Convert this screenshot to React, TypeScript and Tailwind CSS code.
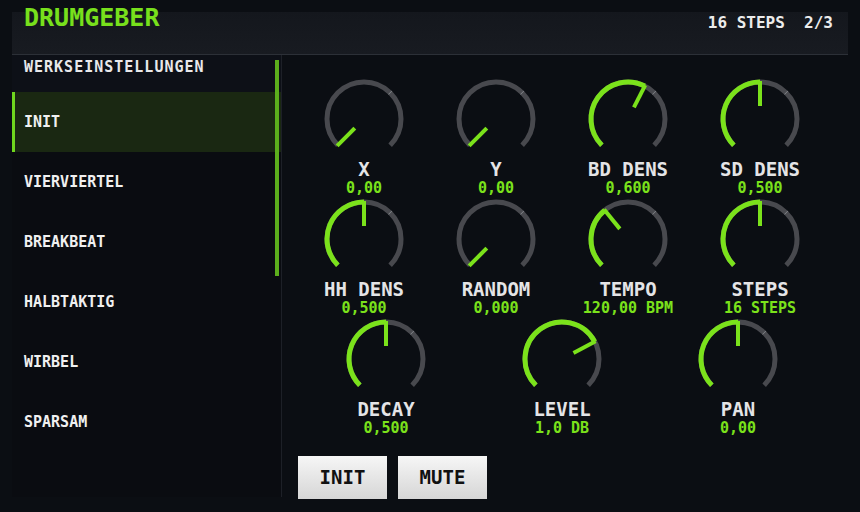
import React from "react";

const GREEN = "#7be21b";
const GRAY = "#48494e";

function polar(cx: number, cy: number, r: number, deg: number): [number, number] {
  const a = (deg * Math.PI) / 180;
  return [cx + r * Math.cos(a), cy - r * Math.sin(a)];
}

function arcPath(cx: number, cy: number, r: number, a0: number, a1: number) {
  const [x0, y0] = polar(cx, cy, r, a0);
  const [x1, y1] = polar(cx, cy, r, a1);
  const large = a0 - a1 > 180 ? 1 : 0;
  return `M ${x0.toFixed(2)} ${y0.toFixed(2)} A ${r} ${r} 0 ${large} 1 ${x1.toFixed(2)} ${y1.toFixed(2)}`;
}

function Knob({ label, value, frac }: { label: string; value: string; frac: number }) {
  const c = 42;
  const r = 37;
  const ang = 225 - frac * 270;
  const [lx0, ly0] = polar(c, c, 13, ang);
  const [lx1, ly1] = polar(c, c, 38, ang);
  return (
    <div className="flex flex-col items-center">
      <svg width="84" height="84" viewBox="0 0 84 84">
        <path d={arcPath(c, c, r, 225, -45)} fill="none" stroke={GRAY} strokeWidth="5" />
        {ang > 46 && (
          <path d={arcPath(c, c, r, 45.6, 44.4)} fill="none" stroke="#85878c" strokeWidth="5" />
        )}
        {frac > 0.001 && (
          <path d={arcPath(c, c, r, 225, ang)} fill="none" stroke={GREEN} strokeWidth="5" />
        )}
        <line x1={lx0} y1={ly0} x2={lx1} y2={ly1} stroke={GREEN} strokeWidth="4" />
      </svg>
      <div className="-mt-[1px] text-[19px] leading-none text-[#e4e4e6] whitespace-pre">{label}</div>
      <div className="mt-[2px] text-[15px] leading-none text-[#7be21b] whitespace-pre">{value}</div>
    </div>
  );
}

const items = ["INIT", "VIERVIERTEL", "BREAKBEAT", "HALBTAKTIG", "WIRBEL", "SPARSAM"];

export default function App() {
  return (
    <div className="w-[860px] h-[512px] overflow-hidden bg-[#0b0e13] pt-[12px] px-[12px] flex flex-col font-bold font-['DejaVu_Sans_Mono',monospace]">
      <header className="h-[43px] shrink-0 bg-gradient-to-b from-[#14171d] to-[#181b21] border-b border-[#2c3037] flex items-start justify-between pl-[12px] pr-[15px]">
        <div className="-mt-[7px] text-[25px] leading-none text-[#78e01c]">DRUMGEBER</div>
        <div className="mt-[3px] text-[16px] leading-none text-[#ececec] whitespace-pre">16 STEPS  2/3</div>
      </header>
      <div className="flex h-[442px] shrink-0">
        <aside className="relative w-[270px] shrink-0 bg-[#0a0c11] border-r border-[#1d2027] flex flex-col">
          <div className="h-[37px] bg-[#0d1017] pl-[12px] pt-[5px] text-[15px] leading-none tracking-[1px] text-[#e8e8ea]">
            WERKSEINSTELLUNGEN
          </div>
          {items.map((it, i) => (
            <div
              key={it}
              className={
                i === 0
                  ? "h-[60px] flex items-center pl-[9px] border-l-[3px] border-[#6fd61e] bg-[#1a2812] text-[15px] leading-none text-[#f0f0f0]"
                  : "h-[60px] flex items-center pl-[12px] text-[15px] leading-none text-[#f0f0f0]"
              }
            >
              {it}
            </div>
          ))}
          <div className="absolute right-[2px] top-[5px] w-[4px] h-[216px] bg-[#5cae1c]" />
        </aside>
        <main className="flex-1 pl-[16px] pt-[22px] flex flex-col">
          <div className="grid grid-cols-[repeat(4,132px)] auto-rows-[120px]">
            <Knob label="X" value="0,00" frac={0} />
            <Knob label="Y" value="0,00" frac={0} />
            <Knob label="BD DENS" value="0,600" frac={0.6} />
            <Knob label="SD DENS" value="0,500" frac={0.5} />
            <Knob label="HH DENS" value="0,500" frac={0.5} />
            <Knob label="RANDOM" value="0,000" frac={0} />
            <Knob label="TEMPO" value="120,00 BPM" frac={0.356} />
            <Knob label="STEPS" value="16 STEPS" frac={0.5} />
          </div>
          <div className="grid grid-cols-[repeat(3,176px)] auto-rows-[120px]">
            <Knob label="DECAY" value="0,500" frac={0.5} />
            <Knob label="LEVEL" value="1,0 DB" frac={0.73} />
            <Knob label="PAN" value="0,00" frac={0.5} />
          </div>
          <div className="mt-[19px] flex gap-[11px]">
            <button className="w-[89px] h-[43px] bg-gradient-to-b from-[#f6f6f6] to-[#d6d6d6] text-[19px] leading-none text-[#111]">
              INIT
            </button>
            <button className="w-[89px] h-[43px] bg-gradient-to-b from-[#f6f6f6] to-[#d6d6d6] text-[19px] leading-none text-[#111]">
              MUTE
            </button>
          </div>
        </main>
      </div>
    </div>
  );
}
